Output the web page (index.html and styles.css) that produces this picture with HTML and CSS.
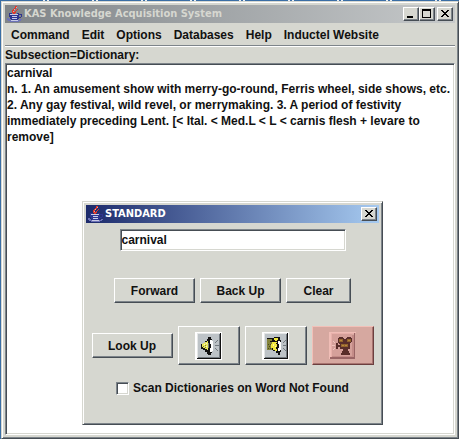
FILE: index.html
```
<!DOCTYPE html>
<html lang="en">
<head>
    <meta charset="UTF-8">
    <meta name="viewport" content="width=device-width, initial-scale=1.0">
    <title>KAS Knowledge Acquisition System</title>
    <link rel="stylesheet" href="styles.css">
</head>
<body>
    <svg width="0" height="0" class="defs">
        <symbol id="java-cup" viewBox="0 0 16 16" shape-rendering="crispEdges">
            <path fill="#e0372c" d="M8 0h2v2H9v1H8v1H7v2h1v2H6V7H5V4h1V3h1V2h1zM10 3h1v1h-1v1H9v2H8V5h1V4h1z"/>
            <path fill="#f3a59e" d="M7 3h1v1H7zM6 5h1v1H6zM9 1h1v1H9z"/>
            <path fill="#2f3590" d="M2 7h3v1H3v1h8V8h-1V7h2v1h3v3h-1v1h-2v1h-1v1H4v-1H3v-2H2zM12 9v2h2V9z" fill-rule="evenodd"/>
            <path fill="#c9cbe6" d="M3 8h8v1H3zM5 10h5v1H5zM5 12h5v1H5z"/>
            <path fill="#6d72b8" d="M0 12h2v1h1v1h10v-1h2v1h-1v1h-2v1H3v-1H1v-1H0z"/>
            <path fill="#c9cbe6" d="M4 14h7v1H4z"/>
        </symbol>
    </svg>

    <main class="window">
        <header class="titlebar inactive">
            <svg class="cup"><use href="#java-cup"/></svg>
            <h1>KAS Knowledge Acquisition System</h1>
            <div class="controls">
                <button class="control" aria-label="Minimize"><svg viewBox="0 0 12 10"><path d="M2 7h6v2H2z"/></svg></button>
                <button class="control" aria-label="Maximize"><svg viewBox="0 0 12 10"><path d="M1 0h9v9H1zM2 2v6h7V2z" fill-rule="evenodd"/></svg></button>
                <button class="control close" aria-label="Close"><svg viewBox="0 0 12 10"><path d="M2 1h2v1h1v1h2V2h1V1h2v1H9v1H8v1H7v1h1v1h1v1h1v1H8V7H7V6H5v1H4v1H2V7h1V6h1V5h1V4H4V3H3V2H2z"/></svg></button>
            </div>
        </header>
        <nav class="menu">
            <button>Command</button>
            <button>Edit</button>
            <button>Options</button>
            <button>Databases</button>
            <button>Help</button>
            <button>Inductel Website</button>
        </nav>
        <label class="section" for="article">Subsection=Dictionary:</label>
        <textarea id="article" spellcheck="false">carnival
n. 1. An amusement show with merry-go-round, Ferris wheel, side shows, etc. 2. Any gay festival, wild revel, or merrymaking. 3. A period of festivity immediately preceding Lent. [&lt; Ital. &lt; Med.L &lt; L &lt; carnis flesh + levare to remove]</textarea>
    </main>

    <section class="dialog" role="dialog" aria-labelledby="dialogTitle">
        <header class="titlebar">
            <svg class="cup"><use href="#java-cup"/></svg>
            <h2 id="dialogTitle">STANDARD</h2>
            <div class="controls">
                <button class="control" aria-label="Close"><svg viewBox="0 0 12 10"><path d="M2 1h2v1h1v1h2V2h1V1h2v1H9v1H8v1H7v1h1v1h1v1h1v1H8V7H7V6H5v1H4v1H2V7h1V6h1V5h1V4H4V3H3V2H2z"/></svg></button>
            </div>
        </header>
        <div class="dialog-body">
            <input class="word" type="text" value="carnival" aria-label="Word">
            <div class="row">
                <button class="btn wide">Forward</button>
                <button class="btn wide">Back Up</button>
                <button class="btn">Clear</button>
            </div>
            <div class="row tools">
                <button class="btn wide">Look Up</button>
                <button class="btn tool" aria-label="Play sound">
                    <svg viewBox="0 0 27 28" shape-rendering="crispEdges">
                        <path fill="#fff" d="M0 0h27v28H0z"/>
                        <path fill="#111" d="M2 1h24v26H2z"/>
                        <path fill="#e4e6e6" d="M2 1h23v1H3v24H2z"/>
                        <path fill="#737a80" d="M3 2h22v24H3z"/>
                        <path fill="#bdc3c7" d="M3 2h21v23H3z"/>
                        <path fill="#111" d="M13 5h3v2h1v14h-1v2h-3v-1h-1v-2h-2v-2H8v-1H6v-5h2v-1h2V9h2V7h1z"/>
                        <path fill="#e9e65a" d="M12 9h1v9h-1v-1h-2v-1H8v-1H7v-3h1v-1h2v-1h2z"/>
                        <path fill="#f8f8c8" d="M9 12h1v1H9zM11 11h1v1h-1zM11 14h1v1h-1z"/>
                        <path fill="#777a3a" d="M8 14h1v1H8zM10 13h1v1h-1zM10 15h1v1h-1z"/>
                        <path fill="#fff" d="M15 8h2v1h1v10h-1v1h-2v-4h1v-4h-1z"/>
                        <path fill="#747b80" d="M13 11h1v5h-1zM22 8h1v1h-1v1h-1v1h-1v-1h1V9h1zM20 13h4v1h-4zM20 16h1v1h1v1h1v1h-1v-1h-1v-1h-1z"/>
                    </svg>
                </button>
                <button class="btn tool" aria-label="Play sound again">
                    <svg viewBox="0 0 27 28" shape-rendering="crispEdges">
                        <path fill="#fff" d="M0 0h27v28H0z"/>
                        <path fill="#111" d="M2 1h24v26H2z"/>
                        <path fill="#e4e6e6" d="M2 1h23v1H3v24H2z"/>
                        <path fill="#737a80" d="M3 2h22v24H3z"/>
                        <path fill="#bdc3c7" d="M3 2h21v23H3z"/>
                        <path fill="#111" d="M5 6h7V5h6v3h1v12h-1v3h-2v-2h-2v-2h-3v-1H5z"/>
                        <path fill="#83823a" d="M5 7h5v2H8v1H5zM5 10h5v8H5z"/>
                        <path fill="#4b4a20" d="M6 12h1v1H6zM8 12h1v1H8zM7 14h1v1H7zM6 16h1v1H6zM8 16h1v1H8z"/>
                        <path fill="#f0e93c" d="M12 6h4v2h-1v1h-2V8h-1zM10 10h5v1h-1v1h1v3h-1v2h1v2h-2v-1h-2v-2H9v-4h1z"/>
                        <path fill="#fff9a8" d="M11 12h1v2h-1zM13 14h1v1h-1z"/>
                        <path fill="#fff" d="M16 9h2v1h1v8h-1v1h-2v-3h1v-4h-1z"/>
                        <path fill="#747b80" d="M23 8h1v1h-1v1h-1v1h-1v-1h1V9h1zM21 13h3v1h-3zM21 16h1v1h1v1h1v1h-1v-1h-1v-1h-1z"/>
                    </svg>
                </button>
                <button class="btn tool movie" aria-label="Play movie">
                    <svg viewBox="0 0 27 28" shape-rendering="crispEdges">
                        <path fill="#f0bdb6" d="M0 0h27v1H2v26H0z"/>
                        <path fill="#9a6565" d="M25 1h1v26H1v-2h24z"/>
                        <path fill="#c48c88" d="M23 3h2v22H3v-1h20z"/>
                        <path fill="#e8b0aa" d="M2 1h23v1H3v23H2z"/>
                        <path fill="#d5a09a" d="M3 2h20v22H3z"/>
                        <path fill="#592e2a" d="M10 5h4v1h1v1h2V6h1V5h4v1h1v4h-1v1h-1v6h-2v2h1v2h1v2h-9v-2h1v-2h1v-2h-3v-2H9v2H7v-6h2v2h2v-1h-1v-1H9V6h1z"/>
                        <path fill="#93642f" d="M10 7h4v3h-4zM18 7h4v3h-4zM12 12h7v3h-7z"/>
                        <path fill="#b8883c" d="M11 8h2v1h-2zM19 8h2v1h-2zM13 13h2v1h-2zM16 13h2v1h-2z"/>
                        <path fill="#f0c5be" d="M4 9h1v1h1v1H5v-1H4zM3 13h3v1H3zM5 16h1v1H5v1H4v-1h1z"/>
                    </svg>
                </button>
            </div>
            <label class="scan"><input type="checkbox">Scan Dictionaries on Word Not Found</label>
        </div>
    </section>
</body>
</html>
```
FILE: styles.css
```
* {
    box-sizing: border-box;
}
body {
    margin: 0;
    padding: 1px 0 0 1px;
    height: 100vh;
    overflow: hidden;
    background: repeating-linear-gradient(90deg, #3a6ea5 0 43px, #e8eef4 43px 45px, #3a6ea5 45px 47px, #e8eef4 47px 49px);
    color: #111;
    font: bold 12px/16px "Liberation Sans", Arial, sans-serif;
}
button, input, textarea {
    font: inherit;
    color: inherit;
    margin: 0;
}
h1, h2 {
    margin: 0;
    font: bold 11px/18px "DejaVu Sans Condensed", "DejaVu Sans", sans-serif;
}
.defs {
    display: none;
}
.window, .dialog {
    display: flex;
    flex-direction: column;
    padding: 3px;
    background-color: #d6d7d0;
    border: 1px solid;
    border-color: #d6d7d0 #464d54 #464d54 #d6d7d0;
    box-shadow: inset 1px 1px #fff, inset -1px -1px #7d848a;
}
.window {
    height: 100%;
}
.titlebar {
    display: flex;
    flex: none;
    align-items: center;
    height: 18px;
    padding: 0 2px;
    gap: 1px;
    background: linear-gradient(90deg, #1c2a6b, #a6caf0);
    color: #fff;
}
.titlebar.inactive {
    background: linear-gradient(90deg, #7f8488, #c6c9ca);
    color: #d6d7d0;
}
.cup {
    flex: none;
    width: 16px;
    height: 16px;
}
.controls {
    display: flex;
    margin-left: auto;
}
.control {
    display: flex;
    align-items: center;
    justify-content: center;
    width: 16px;
    height: 14px;
    padding: 0;
    background-color: #d6d7d0;
    border: 1px solid;
    border-color: #fff #464d54 #464d54 #fff;
    box-shadow: inset -1px -1px #7d848a;
}
.control svg {
    flex: none;
    width: 12px;
    height: 10px;
    shape-rendering: crispEdges;
}
.close {
    margin-left: 2px;
}
.menu {
    display: flex;
    flex: none;
    height: 24px;
    border-bottom: 1px solid #fff;
    box-shadow: inset 0 -1px #7d848a;
}
.menu button {
    padding: 0 6px;
    background: none;
    border: 0;
}
.section {
    flex: none;
}
#article {
    flex: 1;
    width: 100%;
    padding: 1px 0 1px 1px;
    background-color: #fff;
    border: 1px solid;
    border-color: #7d848a #fff #fff #7d848a;
    box-shadow: inset 1px 1px #464d54, inset -1px -1px #d6d7d0;
    resize: none;
    outline: none;
    overflow: hidden;
}
.dialog {
    position: absolute;
    left: 82px;
    top: 201px;
    width: 301px;
}
.dialog-body {
    display: flex;
    flex-direction: column;
    align-items: center;
    padding: 6px 0 25px;
}
.word {
    width: 226px;
    height: 22px;
    padding: 1px;
    background-color: #fff;
    border: 1px solid;
    border-color: #7d848a #fff #fff #7d848a;
    box-shadow: inset 1px 1px #464d54, inset -1px -1px #d6d7d0;
    outline: none;
}
.row {
    display: flex;
    align-items: center;
    gap: 5px;
    margin-top: 27px;
}
.btn {
    width: 65px;
    height: 25px;
    padding: 0;
    background-color: #d6d7d0;
    border: 1px solid;
    border-color: #fff #464d54 #464d54 #fff;
    box-shadow: inset -1px -1px #7d848a;
}
.wide {
    width: 81px;
}
.tools {
    margin-top: 23px;
}
.tool {
    display: flex;
    align-items: center;
    justify-content: center;
    width: 62px;
    height: 39px;
}
.tool svg {
    width: 27px;
    height: 28px;
}
.movie {
    background-color: #d6a8a0;
    border-color: #f2c0b8 #6b3f3f #6b3f3f #f2c0b8;
    box-shadow: inset -1px -1px #a87470;
}
.scan {
    display: flex;
    align-items: center;
    gap: 4px;
    margin-top: 15px;
}
.scan input {
    appearance: none;
    width: 13px;
    height: 13px;
    background-color: #fff;
    border: 1px solid;
    border-color: #7d848a #fff #fff #7d848a;
    box-shadow: inset 1px 1px #464d54, inset -1px -1px #d6d7d0;
}
.scan input:checked {
    background-color: #464d54;
}
```
